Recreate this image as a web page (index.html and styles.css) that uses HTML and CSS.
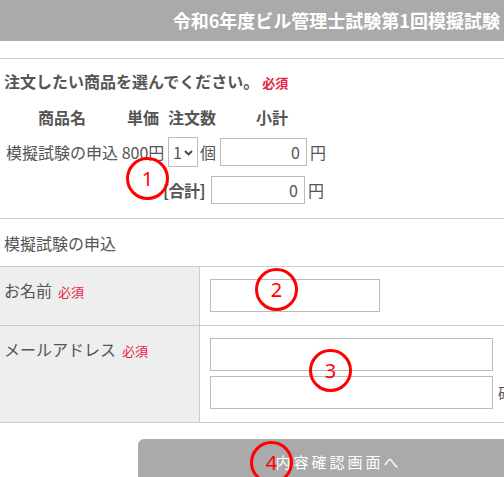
FILE: index.html
```html
<!DOCTYPE html>
<html lang="ja">
<head>
<meta charset="utf-8">
<title>模擬試験の申込</title>
<link rel="stylesheet" href="styles.css">
</head>
<body>
<div class="page">
  <header class="top">令和6年度ビル管理士試験第1回模擬試験</header>

  <section class="order">
    <div class="order-title">注文したい商品を選んでください。<span class="req">必須</span></div>
    <div class="grid head">
      <div>商品名</div><div>単価</div><div>注文数</div><div>小計</div>
    </div>
    <div class="grid item">
      <div>模擬試験の申込</div>
      <div>800円</div>
      <div class="qty">
        <span class="sel"><select><option>1</option></select><svg class="chev" width="9" height="6" viewBox="0 0 9 6"><path d="M1 1 L4.5 4.5 L8 1" fill="none" stroke="#444" stroke-width="1.8"/></svg></span><span>個</span>
      </div>
      <div class="sub"><input class="num" type="text" value="0"><span>円</span></div>
    </div>
    <div class="total">
      <span class="total-label">[合計]</span><input class="num total-in" type="text" value="0"><span>円</span>
    </div>
  </section>

  <section class="plan">模擬試験の申込</section>

  <div class="form">
    <div class="frow">
      <div class="flabel">お名前<span class="req small">必須</span></div>
      <div class="fval"><input class="in name" type="text"></div>
    </div>
    <div class="frow">
      <div class="flabel">メールアドレス<span class="req small">必須</span></div>
      <div class="fval">
        <input class="in mail" type="text">
        <div class="line2"><input class="in mail" type="text"><span class="note">確認用</span></div>
      </div>
    </div>
  </div>

  <div class="actions">
    <button class="submit" type="button">内容確認画面へ</button>
  </div>

  <div class="mark m1"><span>1</span></div>
  <div class="mark m2"><span>2</span></div>
  <div class="mark m3"><span>3</span></div>
  <div class="mark m4"><span>4</span></div>
</div>
</body>
</html>
```

FILE: styles.css
```css
html, body {
  margin: 0;
  padding: 0;
  background: #fff;
}
body {
  font-family: "Noto Sans CJK JP", "Noto Sans", sans-serif;
  color: #555;
  font-size: 16px;
  overflow: hidden;
}
.page {
  position: relative;
  width: 504px;
  height: 477px;
  overflow: hidden;
}
.top {
  height: 41px;
  line-height: 40px;
  background: #aaa;
  color: #fff;
  font-weight: bold;
  font-size: 18px;
  text-align: right;
  padding-right: 4px;
  white-space: nowrap;
  margin-bottom: 17px;
}
.order {
  border-top: 1px solid #ccc;
  padding: 11px 0 14px 4px;
}
.order-title {
  font-weight: bold;
  line-height: 22px;
  white-space: nowrap;
}
.req {
  color: #e8213f;
  font-size: 13px;
  font-weight: bold;
  margin-left: 3px;
}
.req.small {
  font-weight: normal;
  margin-left: 6px;
}
.grid {
  display: grid;
  grid-template-columns: 116px 46px 52px 108px;
  align-items: center;
  text-align: center;
  white-space: nowrap;
}
.head {
  font-weight: bold;
  line-height: 22px;
  margin-top: 12px;
}
.item {
  height: 32px;
  margin-top: 8px;
}
.qty, .sub {
  display: flex;
  align-items: center;
  justify-content: center;
}
.sub {
  justify-content: flex-start;
  padding-left: 2px;
}
.sel {
  position: relative;
  display: inline-block;
  flex-shrink: 0;
  width: 30px;
  height: 30px;
  margin-right: 2px;
}
.sel select {
  appearance: none;
  -webkit-appearance: none;
  width: 30px;
  height: 30px;
  box-sizing: border-box;
  border: 1px solid #bbb;
  border-radius: 0;
  background: #fff;
  font-family: inherit;
  font-size: 16px;
  color: #555;
  padding: 0 0 0 4px;
  margin: 0;
}
.chev {
  position: absolute;
  right: 5px;
  top: 13px;
}
.num {
  box-sizing: border-box;
  flex-shrink: 0;
  width: 87px;
  height: 28px;
  border: 1px solid #bbb;
  text-align: right;
  padding: 0 6px;
  font-family: inherit;
  font-size: 16px;
  color: #555;
  margin: 0 3px 0 0;
}
.total {
  display: flex;
  align-items: center;
  justify-content: flex-end;
  width: 320px;
  height: 28px;
  margin-top: 8px;
  white-space: nowrap;
}
.total-label {
  font-weight: bold;
  margin-right: 6px;
  letter-spacing: -0.5px;
}
.total-in {
  width: 94px;
}
.plan {
  border-top: 1px solid #ccc;
  padding: 13px 0 12px 4px;
  line-height: 22px;
}
.form {
  border-top: 1px solid #ccc;
}
.frow {
  display: flex;
  border-bottom: 1px solid #ccc;
}
.flabel {
  flex: 0 0 195px;
  background: #eee;
  border-right: 1px solid #ccc;
  padding: 12px 0 0 4px;
  line-height: 22px;
  white-space: nowrap;
}
.fval {
  flex: 1;
  min-width: 0;
  padding: 12px 0 13px 10px;
  display: flex;
  flex-direction: column;
  gap: 5px;
}
.in {
  box-sizing: border-box;
  flex-shrink: 0;
  height: 33px;
  border: 1px solid #bbb;
  margin: 0;
  background: #fff;
}
.name {
  width: 170px;
}
.mail {
  width: 283px;
}
.line2 {
  display: flex;
  align-items: center;
  white-space: nowrap;
}
.note {
  margin-left: 5px;
  font-size: 15px;
}
.actions {
  padding: 16px 0 0 138px;
}
.submit {
  width: 398px;
  height: 44px;
  border: 0;
  border-radius: 6px;
  background: #aaa;
  color: #fff;
  font-family: inherit;
  font-size: 15px;
  letter-spacing: 3px;
  padding: 0 0 0 3px;
  margin: 0;
}
.mark {
  position: absolute;
  width: 37px;
  height: 37px;
  border: 3px solid #f00;
  border-radius: 50%;
  display: flex;
  align-items: center;
  justify-content: center;
  color: #f00;
  font-family: "Noto Sans", sans-serif;
  font-size: 20px;
  line-height: 1;
}
.m1 { left: 126px; top: 157px; }
.m2 { left: 255px; top: 268px; }
.m3 { left: 309px; top: 349px; }
.m4 { left: 250px; top: 441px; }
```
